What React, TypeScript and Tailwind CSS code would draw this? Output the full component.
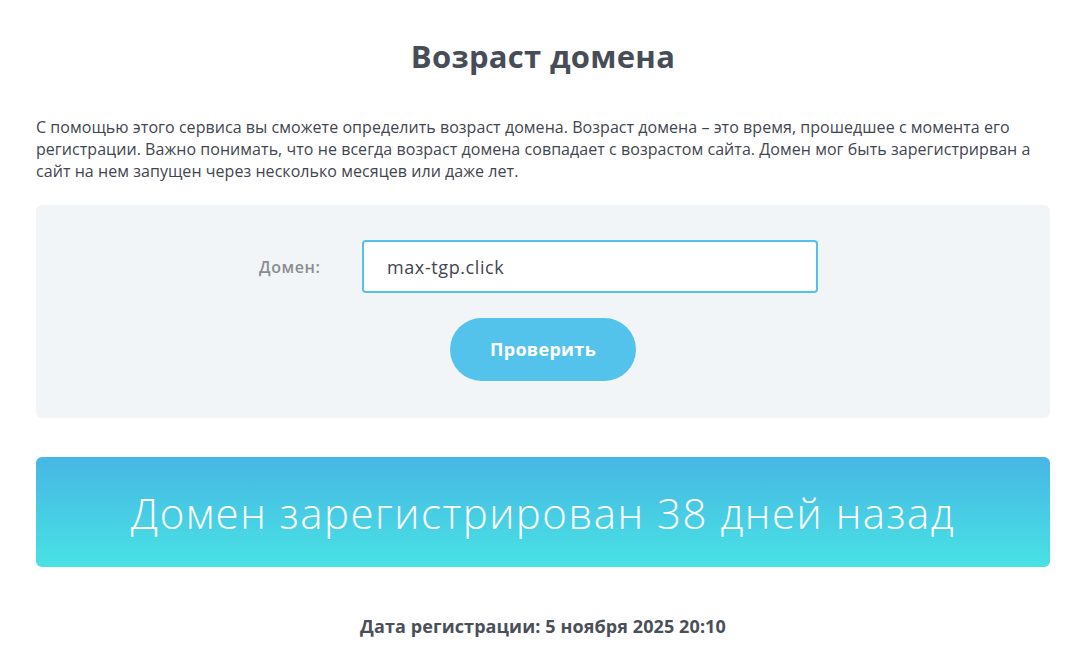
import { useState } from "react"

export default function App() {
  const [domain, setDomain] = useState("max-tgp.click")

  return (
    <div className="min-h-screen bg-white font-['Open_Sans',sans-serif] text-[#3f4650]">
      <div className="ml-[36px] w-[1014px] pt-[36px]">
        <h1 className="text-center text-[31px] font-bold leading-[40px] tracking-[0.3px] text-[#474d56]">
          Возраст домена
        </h1>

        <p className="mt-[40px] text-[16px] leading-[22px] tracking-[0.05px]">
          С помощью этого сервиса вы сможете определить возраст домена. Возраст домена – это время, прошедшее с
          момента его регистрации. Важно понимать, что не всегда возраст домена совпадает с возрастом сайта. Домен
          мог быть зарегистрирван а сайт на нем запущен через несколько месяцев или даже лет.
        </p>

        <div className="mt-[23px] flex h-[213px] flex-col items-center rounded-md bg-[#f2f5f7] pt-[35px]">
          <div className="mr-[9px] flex items-center">
            <label className="w-[103px] text-[16px] font-semibold tracking-[0.6px] text-[#8a8d90]">Домен:</label>
            <input
              type="text"
              value={domain}
              onChange={(e) => setDomain(e.target.value)}
              className="h-[53px] w-[456px] rounded-[4px] border-2 border-[#55c1ea] bg-white px-[23px] text-[18px] tracking-[0.6px] text-[#3f4650] outline-none"
            />
          </div>
          <button
            type="button"
            className="mt-[25px] h-[63px] w-[186px] rounded-full bg-[#53c3ec] text-[18px] font-bold tracking-[0.3px] text-white"
          >
            Проверить
          </button>
        </div>

        <div className="mt-[39px] flex h-[110px] items-center justify-center rounded-md bg-gradient-to-b from-[#47b6e4] to-[#48e2e4]">
          <span className="text-[42px] font-light tracking-[1.5px] text-white">
            Домен зарегистрирован 38 дней назад
          </span>
        </div>

        <p className="mt-[46px] text-center text-[18px] font-bold tracking-[0.1px] text-[#4a5058]">
          Дата регистрации: 5 ноября 2025 20:10
        </p>
      </div>
    </div>
  )
}
